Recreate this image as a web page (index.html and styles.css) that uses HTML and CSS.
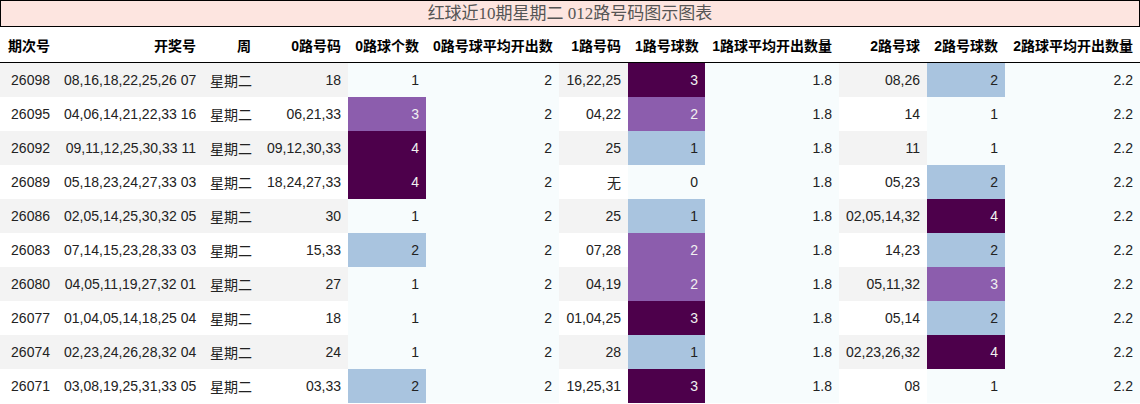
FILE: index.html
```html
<!DOCTYPE html>
<html lang="zh">
<head>
<meta charset="utf-8">
<title>红球近10期星期二 012路号码图示图表</title>
<link rel="stylesheet" href="styles.css">
</head>
<body>
<div class="title">红球近10期星期二 012路号码图示图表</div>
<table class="chart">
<colgroup>
<col style="width:57px"><col style="width:146px"><col style="width:55px"><col style="width:90px"><col style="width:78px"><col style="width:133px"><col style="width:69px"><col style="width:77px"><col style="width:134px"><col style="width:88px"><col style="width:78px"><col style="width:135px">
</colgroup>
<thead>
<tr><th class="first">期次号</th><th>开奖号</th><th>周</th><th>0路号码</th><th>0路球个数</th><th>0路号球平均开出数</th><th>1路号码</th><th>1路号球数</th><th>1路球平均开出数量</th><th>2路号球</th><th>2路号球数</th><th>2路球平均开出数量</th></tr>
</thead>
<tbody>
<tr><td>26098</td><td>08,16,18,22,25,26 07</td><td>星期二</td><td>18</td><td class="h1">1</td><td class="h1">2</td><td>16,22,25</td><td class="h4">3</td><td class="h1">1.8</td><td>08,26</td><td class="h2">2</td><td class="h1">2.2</td></tr>
<tr><td>26095</td><td>04,06,14,21,22,33 16</td><td>星期二</td><td>06,21,33</td><td class="h3">3</td><td class="h1">2</td><td>04,22</td><td class="h3">2</td><td class="h1">1.8</td><td>14</td><td class="h1">1</td><td class="h1">2.2</td></tr>
<tr><td>26092</td><td>09,11,12,25,30,33 11</td><td>星期二</td><td>09,12,30,33</td><td class="h4">4</td><td class="h1">2</td><td>25</td><td class="h2">1</td><td class="h1">1.8</td><td>11</td><td class="h1">1</td><td class="h1">2.2</td></tr>
<tr><td>26089</td><td>05,18,23,24,27,33 03</td><td>星期二</td><td>18,24,27,33</td><td class="h4">4</td><td class="h1">2</td><td>无</td><td class="h1">0</td><td class="h1">1.8</td><td>05,23</td><td class="h2">2</td><td class="h1">2.2</td></tr>
<tr><td>26086</td><td>02,05,14,25,30,32 05</td><td>星期二</td><td>30</td><td class="h1">1</td><td class="h1">2</td><td>25</td><td class="h2">1</td><td class="h1">1.8</td><td>02,05,14,32</td><td class="h4">4</td><td class="h1">2.2</td></tr>
<tr><td>26083</td><td>07,14,15,23,28,33 03</td><td>星期二</td><td>15,33</td><td class="h2">2</td><td class="h1">2</td><td>07,28</td><td class="h3">2</td><td class="h1">1.8</td><td>14,23</td><td class="h2">2</td><td class="h1">2.2</td></tr>
<tr><td>26080</td><td>04,05,11,19,27,32 01</td><td>星期二</td><td>27</td><td class="h1">1</td><td class="h1">2</td><td>04,19</td><td class="h3">2</td><td class="h1">1.8</td><td>05,11,32</td><td class="h3">3</td><td class="h1">2.2</td></tr>
<tr><td>26077</td><td>01,04,05,14,18,25 04</td><td>星期二</td><td>18</td><td class="h1">1</td><td class="h1">2</td><td>01,04,25</td><td class="h4">3</td><td class="h1">1.8</td><td>05,14</td><td class="h2">2</td><td class="h1">2.2</td></tr>
<tr><td>26074</td><td>02,23,24,26,28,32 04</td><td>星期二</td><td>24</td><td class="h1">1</td><td class="h1">2</td><td>28</td><td class="h2">1</td><td class="h1">1.8</td><td>02,23,26,32</td><td class="h4">4</td><td class="h1">2.2</td></tr>
<tr><td>26071</td><td>03,08,19,25,31,33 05</td><td>星期二</td><td>03,33</td><td class="h2">2</td><td class="h1">2</td><td>19,25,31</td><td class="h4">3</td><td class="h1">1.8</td><td>08</td><td class="h1">1</td><td class="h1">2.2</td></tr>
</tbody>
</table>
</body>
</html>
```
FILE: styles.css
```css
html, body {
  margin: 0;
  padding: 0;
  background: #ffffff;
}
body {
  width: 1140px;
  font-family: "Liberation Sans", Arial, "Noto Sans CJK SC", sans-serif;
  font-size: 14px;
  color: #222;
}
.title {
  box-sizing: border-box;
  height: 27px;
  border: 1px solid #000;
  background: #fde5e0;
  color: #555;
  font-family: "Liberation Serif", "Noto Sans CJK SC", serif;
  font-size: 17px;
  line-height: 26px;
  text-align: center;
}
.chart {
  width: 1140px;
  table-layout: fixed;
  border-collapse: separate;
  border-spacing: 0;
}
.chart thead tr {
  height: 36px;
}
.chart th {
  padding: 0 7px;
  font-weight: bold;
  color: #000;
  text-align: right;
  white-space: nowrap;
  border-bottom: 1px solid #000;
}
.chart th.first {
  text-align: left;
  padding-left: 8px;
}
.chart tbody tr {
  height: 34px;
}
.chart td {
  padding: 0 7px;
  text-align: right;
  white-space: nowrap;
}
.chart tbody tr:nth-child(odd) td {
  background: #f3f3f3;
}
.chart tbody tr:nth-child(even) td {
  background: #ffffff;
}
.chart tbody tr td.h1 {
  background: #f7fcfd;
  color: #222;
}
.chart tbody tr td.h2 {
  background: #a9c4df;
  color: #222;
}
.chart tbody tr td.h3 {
  background: #8c5dad;
  color: #f1f1f1;
}
.chart tbody tr td.h4 {
  background: #4d004b;
  color: #f1f1f1;
}
```
